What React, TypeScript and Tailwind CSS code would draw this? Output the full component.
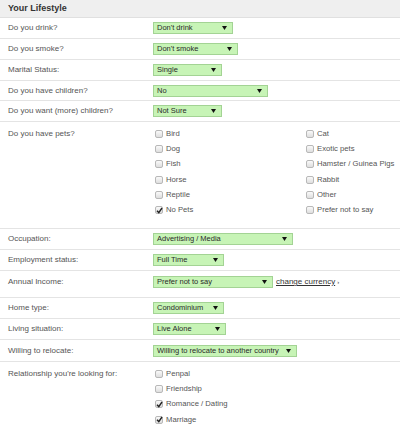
const Arrow = () => (
  <svg width="5" height="4" viewBox="0 0 5 4" className="shrink-0">
    <path d="M0 0 L5 0 L2.5 4 Z" fill="#111" />
  </svg>
);

const Select = ({ value, width }: { value: string; width: number }) => (
  <div
    className="flex h-[12px] items-center justify-between border border-[#a3d394] bg-[#c7f4b6] pl-[3px] pr-[5px] text-[7.5px] leading-none text-[#2a2a2a]"
    style={{ width }}
  >
    <span className="whitespace-nowrap">{value}</span>
    <Arrow />
  </div>
);

const Check = ({ label, checked }: { label: string; checked?: boolean }) => (
  <div className="flex h-[15.3px] items-center gap-[3px] pl-[2px]">
    <span className="relative flex h-[8px] w-[8px] items-center justify-center rounded-[2px] border border-[#b8b8b8] bg-gradient-to-b from-[#fafafa] to-[#dedede]">
      {checked && (
        <svg width="7" height="7" viewBox="0 0 7 7" className="absolute">
          <path d="M1 3.8 L2.8 5.6 L6 1" stroke="#222" strokeWidth="1.4" fill="none" />
        </svg>
      )}
    </span>
    <span className="whitespace-nowrap text-[7.7px] text-[#555]">{label}</span>
  </div>
);

const Row = ({
  label,
  children,
  className = "h-[21px] items-center",
}: {
  label: string;
  children: React.ReactNode;
  className?: string;
}) => (
  <div className={`flex border-b border-[#e4e4e4] ${className}`}>
    <div className="w-[153px] shrink-0 pl-[8px] text-[8px] text-[#555]">{label}</div>
    <div className="flex items-center">{children}</div>
  </div>
);

export default function App() {
  const petsLeft = ["Bird", "Dog", "Fish", "Horse", "Reptile", "No Pets"];
  const petsRight = ["Cat", "Exotic pets", "Hamster / Guinea Pigs", "Rabbit", "Other", "Prefer not to say"];

  return (
    <div className="h-[426px] w-[400px] overflow-hidden bg-white font-['Liberation_Sans',Arial,sans-serif]">
      {/* Header */}
      <div className="flex h-[18px] items-center border-b border-[#e0e0e0] bg-[#efefef] pl-[8px] text-[9px] font-bold text-[#333]">
        Your Lifestyle
      </div>

      <Row label="Do you drink?">
        <Select value="Don't drink" width={80} />
      </Row>
      <Row label="Do you smoke?">
        <Select value="Don't smoke" width={85} />
      </Row>
      <Row label="Marital Status:">
        <Select value="Single" width={69} />
      </Row>
      <Row label="Do you have children?" className="h-[20px] items-center">
        <Select value="No" width={115} />
      </Row>
      <Row label="Do you want (more) children?">
        <Select value="Not Sure" width={69} />
      </Row>

      {/* Pets */}
      <div className="flex h-[107px] border-b border-[#e4e4e4] pt-[4px]">
        <div className="w-[153px] shrink-0 pl-[8px] text-[8px] leading-[15px] text-[#555]">Do you have pets?</div>
        <div className="grid grid-cols-[151px_1fr]">
          <div className="flex flex-col">
            {petsLeft.map((p) => (
              <Check key={p} label={p} checked={p === "No Pets"} />
            ))}
          </div>
          <div className="flex flex-col">
            {petsRight.map((p) => (
              <Check key={p} label={p} />
            ))}
          </div>
        </div>
      </div>

      <Row label="Occupation:">
        <Select value="Advertising / Media" width={140} />
      </Row>
      <Row label="Employment status:">
        <Select value="Full Time" width={71} />
      </Row>
      <Row label="Annual Income:" className="h-[27px] items-start pt-[5px]">
        <Select value="Prefer not to say" width={120} />
        <span className="ml-[3px] whitespace-nowrap text-[8px] text-[#333]">
          <span className="underline">change currency</span>
          <span className="ml-[2px] text-[6px]">›</span>
        </span>
      </Row>
      <Row label="Home type:">
        <Select value="Condominium" width={71} />
      </Row>
      <Row label="Living situation:">
        <Select value="Live Alone" width={73} />
      </Row>
      <Row label="Willing to relocate:" className="h-[22px] items-center">
        <Select value="Willing to relocate to another country" width={144} />
      </Row>

      {/* Relationship */}
      <div className="flex pt-[4px]">
        <div className="w-[153px] shrink-0 pl-[8px] text-[8px] leading-[15px] text-[#555]">
          Relationship you're looking for:
        </div>
        <div className="flex flex-col">
          <Check label="Penpal" />
          <Check label="Friendship" />
          <Check label="Romance / Dating" checked />
          <Check label="Marriage" checked />
        </div>
      </div>
    </div>
  );
}
